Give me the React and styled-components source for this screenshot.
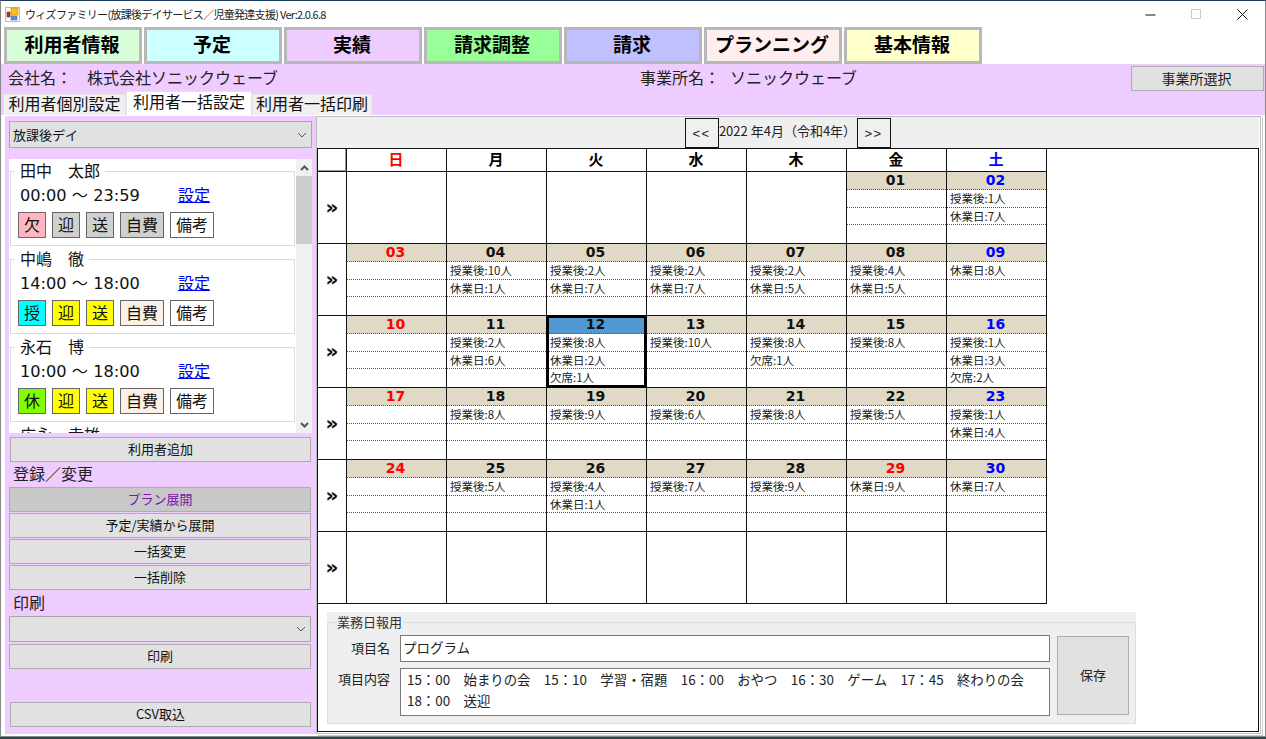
import React from "react";
import styled, { createGlobalStyle } from "styled-components";

const JP = `"Noto Sans CJK JP", "Liberation Sans", sans-serif`;
const NUM = `"DejaVu Sans", "Noto Sans CJK JP", sans-serif`;

const GlobalStyle = createGlobalStyle`
  html, body { margin: 0; padding: 0; height: 100%; overflow: hidden; background: #2a4a58; }
  body { font-family: ${JP}; color: #111; }
  * { box-sizing: border-box; }
`;

const navItems = [
  ["利用者情報", "#d9ffd9"],
  ["予定", "#ccffff"],
  ["実績", "#eeccff"],
  ["請求調整", "#99ff99"],
  ["請求", "#c0c0ff"],
  ["プランニング", "#ffeeee"],
  ["基本情報", "#ffffcc"],
];

const users = [
  { name: "田中　太郎", time: "00:00 ～ 23:59", kind: ["欠", "#ffb6c1"], pick: "#d0d0d0", self: "#d0d0d0" },
  { name: "中嶋　徹", time: "14:00 ～ 18:00", kind: ["授", "#00ffff"], pick: "#ffff00", self: "#faf0e6" },
  { name: "永石　博", time: "10:00 ～ 18:00", kind: ["休", "#7fff00"], pick: "#ffff00", self: "#faf0e6" },
];

const weekDays = [
  ["日", "#ff0000"],
  ["月", "#000"],
  ["火", "#000"],
  ["水", "#000"],
  ["木", "#000"],
  ["金", "#000"],
  ["土", "#0000ff"],
];

const weeks = [
  [null, null, null, null, null, { d: "01" }, { d: "02", c: "b", l: ["授業後:1人", "休業日:7人"] }],
  [
    { d: "03", c: "r" },
    { d: "04", l: ["授業後:10人", "休業日:1人"] },
    { d: "05", l: ["授業後:2人", "休業日:7人"] },
    { d: "06", l: ["授業後:2人", "休業日:7人"] },
    { d: "07", l: ["授業後:2人", "休業日:5人"] },
    { d: "08", l: ["授業後:4人", "休業日:5人"] },
    { d: "09", c: "b", l: ["休業日:8人"] },
  ],
  [
    { d: "10", c: "r" },
    { d: "11", l: ["授業後:2人", "休業日:6人"] },
    { d: "12", sel: true, l: ["授業後:8人", "休業日:2人", "欠席:1人"] },
    { d: "13", l: ["授業後:10人"] },
    { d: "14", l: ["授業後:8人", "欠席:1人"] },
    { d: "15", l: ["授業後:8人"] },
    { d: "16", c: "b", l: ["授業後:1人", "休業日:3人", "欠席:2人"] },
  ],
  [
    { d: "17", c: "r" },
    { d: "18", l: ["授業後:8人"] },
    { d: "19", l: ["授業後:9人"] },
    { d: "20", l: ["授業後:6人"] },
    { d: "21", l: ["授業後:8人"] },
    { d: "22", l: ["授業後:5人"] },
    { d: "23", c: "b", l: ["授業後:1人", "休業日:4人"] },
  ],
  [
    { d: "24", c: "r" },
    { d: "25", l: ["授業後:5人"] },
    { d: "26", l: ["授業後:4人", "休業日:1人"] },
    { d: "27", l: ["授業後:7人"] },
    { d: "28", l: ["授業後:9人"] },
    { d: "29", c: "r", l: ["休業日:9人"] },
    { d: "30", c: "b", l: ["休業日:7人"] },
  ],
  [null, null, null, null, null, null, null],
];

const dayColor = { r: "#ff0000", b: "#0000ff" };

const Win = styled.div`
  width: 1266px;
  height: 737px;
  background: #fff;
  border: 1px solid #888;
  border-top-color: #1c3d5e;
  display: flex;
  flex-direction: column;
`;

const TitleBar = styled.div`
  height: 26px;
  display: flex;
  align-items: center;
  padding-left: 4px;
  font-size: 11px;
  color: #222;
  letter-spacing: -0.7px;
  flex-shrink: 0;
`;

const TitleText = styled.span`
  margin-left: 5px;
  flex: 1;
`;

const WinBtn = styled.div`
  width: 46px;
  height: 26px;
  display: flex;
  align-items: center;
  justify-content: center;
`;

const NavBar = styled.div`
  display: flex;
  gap: 2px;
  padding-left: 3px;
  height: 37px;
  flex-shrink: 0;
`;

const NavButton = styled.div`
  width: 138px;
  height: 37px;
  border: 3px solid #b8b8b8;
  background: ${(p) => p.$bg};
  display: flex;
  align-items: center;
  justify-content: center;
  font-size: 19px;
  line-height: 26px;
  padding: 0 2px 4px 0;
  font-weight: 700;
  color: #000;
`;

const Purple = styled.div`
  background: #eeccff;
  height: 51px;
  display: flex;
  flex-direction: column;
  flex-shrink: 0;
`;

const CompanyRow = styled.div`
  height: 28px;
  display: flex;
  align-items: center;
  font-size: 16px;
  color: #222;
  padding-left: 7px;
`;

const CompanyLabel = styled.span`
  width: ${(p) => p.$w}px;
  margin-top: -3px;
`;

const CompanyName = styled.span`
  width: ${(p) => p.$w}px;
  margin-top: -3px;
`;

const SelectOffice = styled.div`
  width: 133px;
  height: 25px;
  align-self: flex-start;
  margin: 2px 1px 0 auto;
  padding: 0 2px 2px 0;
  background: #e1e1e1;
  border: 1px solid #adadad;
  font-size: 14px;
  display: flex;
  align-items: center;
  justify-content: center;
`;

const Tabs = styled.div`
  height: 23px;
  display: flex;
  align-items: flex-end;
  padding-left: 2px;
`;

const Tab = styled.div`
  height: ${(p) => (p.$active ? 24 : 21)}px;
  width: ${(p) => p.$w}px;
  background: ${(p) => (p.$active ? "#fff" : "#f0f0f0")};
  border: 1px solid #e4e4e4;
  border-bottom: 0;
  font-size: 16px;
  line-height: ${(p) => (p.$active ? 18 : 17)}px;
  text-align: center;
  color: #111;
  white-space: nowrap;
`;

const Body = styled.div`
  flex: 1;
  display: flex;
  padding: 1px 4px 2px 4px;
  background: #fff;
  min-height: 0;
`;

const Left = styled.div`
  width: 311px;
  background: #eeccff;
  padding: 5px 3px 0 4px;
  display: flex;
  flex-direction: column;
`;

const Combo = styled.div`
  width: ${(p) => p.$w}px;
  height: ${(p) => p.$h}px;
  margin-top: ${(p) => p.$mt || 0}px;
  background: #e1e1e1;
  border: 1px solid #a8a8a8;
  font-size: 13px;
  display: flex;
  align-items: center;
  justify-content: space-between;
  padding: 0 4px 0 3px;
  flex-shrink: 0;
`;

const ListBox = styled.div`
  margin-top: 11px;
  width: 303px;
  height: 274px;
  background: #fff;
  display: flex;
  flex-shrink: 0;
  overflow: hidden;
`;

const ListInner = styled.div`
  flex: 1;
  overflow: hidden;
  padding: 12px 1px 0 1px;
`;

const Group = styled.div`
  position: relative;
  width: 285px;
  height: 75px;
  margin-bottom: 13px;
  border: 1px solid #dcdcdc;
  padding: 11px 0 0 7px;
`;

const GroupName = styled.div`
  position: absolute;
  left: 4px;
  top: -11px;
  background: #fff;
  padding: 0 5px;
  font-size: 16px;
  line-height: 18px;
  color: #111;
`;

const TimeRow = styled.div`
  display: flex;
  align-items: center;
  height: 24px;
  font-family: ${NUM};
  font-size: 16.2px;
  padding: 0 0 3px 2px;
  color: #111;
`;

const TimeText = styled.span`
  width: 158px;
  white-space: nowrap;
`;

const SetLink = styled.a`
  color: #0000ee;
  text-decoration: underline;
  font-family: ${JP};
  font-size: 16px;
`;

const Chips = styled.div`
  display: flex;
  gap: 6px;
  margin-top: 5px;
`;

const Chip = styled.div`
  width: ${(p) => p.$w}px;
  height: 26px;
  background: ${(p) => p.$bg};
  border: 1px solid #666;
  font-size: 16px;
  line-height: 23px;
  text-align: center;
  color: #111;
`;

const ScrollBar = styled.div`
  width: 16px;
  background: #f0f0f0;
  display: flex;
  flex-direction: column;
  justify-content: space-between;
  align-items: center;
  position: relative;
`;

const ScrollArrow = styled.div`
  height: 17px;
  display: flex;
  align-items: center;
  justify-content: center;
`;

const ScrollThumb = styled.div`
  position: absolute;
  top: 17px;
  left: 0;
  width: 16px;
  height: 68px;
  background: #cdcdcd;
`;

const SideButton = styled.div`
  width: ${(p) => p.$w || 302}px;
  height: 25px;
  margin-left: ${(p) => p.$ml || 0}px;
  margin-top: ${(p) => p.$mt || 0}px;
  padding-bottom: 2px;
  background: ${(p) => (p.$on ? "#c8c8c8" : "#e1e1e1")};
  border: 1px solid #adadad;
  color: ${(p) => (p.$on ? "#7a12b0" : "#111")};
  font-size: 13px;
  display: flex;
  align-items: center;
  justify-content: center;
  flex-shrink: 0;
`;

const SideLabel = styled.div`
  font-size: 16px;
  height: 20px;
  line-height: 17px;
  padding-left: 4px;
  margin-top: ${(p) => p.$mt}px;
  color: #222;
`;

const Right = styled.div`
  flex: 1;
  border: 1px solid #bdbdbd;
  box-shadow: 1px 1px 0 #fff, 2px 2px 0 #c8c8c8;
  padding: 0 1px 1px 0;
  display: flex;
  flex-direction: column;
  background: #fff;
  min-width: 0;
`;

const MonthBar = styled.div`
  height: 31px;
  background: #efefef;
  display: flex;
  justify-content: center;
  align-items: flex-end;
  padding-right: 1px;
  font-size: 13px;
  color: #222;
  flex-shrink: 0;
`;

const MonthButton = styled.div`
  width: 34px;
  height: 30px;
  border: 1px solid #111;
  background: #f0f0f0;
  display: flex;
  align-items: center;
  justify-content: center;
  font-family: "Liberation Sans", sans-serif;
  font-size: 13px;
  letter-spacing: 1.5px;
`;

const MonthText = styled.div`
  width: 138px;
  height: 30px;
  line-height: 26px;
  text-align: center;
  white-space: nowrap;
`;

const CalendarBox = styled.div`
  flex: 1;
  border: 1px solid #111;
  background: #fff;
  display: flex;
  flex-direction: column;
  min-height: 0;
`;

const CalGrid = styled.div`
  display: grid;
  grid-template-columns: 29px repeat(7, 100px);
  grid-template-rows: 23px repeat(6, 72px);
  width: 729px;
  flex-shrink: 0;
`;

const CornerCell = styled.div`
  border-right: 1px solid #111;
  border-bottom: 1px solid #111;
  box-shadow: inset -1px -1px 0 #999;
`;

const HeadCell = styled.div`
  border-right: 1px solid #111;
  border-bottom: 1px solid #111;
  color: ${(p) => p.$c};
  font-size: 15px;
  font-weight: 700;
  text-align: center;
  line-height: 20px;
  padding-right: 1px;
`;

const RowHead = styled.div`
  border-right: 1px solid #111;
  border-bottom: 1px solid #111;
  display: flex;
  align-items: center;
  justify-content: center;
  font-family: ${NUM};
  font-size: 20px;
  font-weight: 700;
  padding-bottom: 1px;
`;

const DayCell = styled.div`
  position: relative;
  z-index: ${(p) => (p.$sel ? 1 : "auto")};
  border-right: 1px solid #111;
  border-bottom: 1px solid #111;
  display: flex;
  flex-direction: column;
  &::after {
    content: "";
    display: ${(p) => (p.$sel ? "block" : "none")};
    position: absolute;
    inset: -1px;
    border: 3px solid #000;
    pointer-events: none;
  }
`;

const DayNum = styled.div`
  height: 18px;
  background: ${(p) => (p.$sel ? "#5299d3" : "#dfd9c5")};
  border-bottom: 1px dotted #555;
  color: ${(p) => p.$c};
  font-family: ${NUM};
  font-size: 14px;
  font-weight: 700;
  line-height: 16px;
  text-align: center;
  padding-right: 2px;
`;

const DayLine = styled.div`
  height: 18px;
  border-bottom: ${(p) => (p.$last ? "0" : "1px dotted #555")};
  font-size: 11.5px;
  line-height: 16px;
  padding-left: 3px;
  color: #222;
  white-space: nowrap;
`;

const ReportWrap = styled.div`
  margin: 8px 0 0 9px;
  width: 809px;
  height: 112px;
  background: #efefef;
  padding-top: 10px;
  flex-shrink: 0;
`;

const ReportGroup = styled.div`
  position: relative;
  height: 102px;
  border: 1px solid #dcdcdc;
  display: grid;
  grid-template-columns: 62px 650px 1fr;
  grid-template-rows: 27px 48px;
  row-gap: 6px;
  column-gap: 10px;
  padding: 12px 0 0 0;
  align-items: stretch;
`;

const ReportTitle = styled.div`
  position: absolute;
  left: 9px;
  top: -9px;
  background: #efefef;
  font-size: 13px;
  line-height: 16px;
  color: #333;
  padding-right: 1px;
`;

const ReportLabel = styled.div`
  font-size: 13px;
  text-align: right;
  line-height: ${(p) => p.$lh}px;
  color: #222;
  white-space: nowrap;
`;

const ReportInput = styled.div`
  background: #fff;
  border: 1px solid #7a7a7a;
  font-size: ${(p) => p.$fs}px;
  line-height: ${(p) => p.$lh}px;
  padding: ${(p) => p.$pad};
  color: #222;
  white-space: pre;
`;

const SaveButton = styled.div`
  grid-column: 3;
  grid-row: 1 / span 2;
  width: 72px;
  height: 79px;
  margin-left: -3px;
  margin-top: 1px;
  padding-bottom: 3px;
  background: #e1e1e1;
  border: 1px solid #adadad;
  font-size: 13px;
  color: #222;
  display: flex;
  align-items: center;
  justify-content: center;
`;

const Chevron = () => (
  <svg width="10" height="6" viewBox="0 0 10 6">
    <path d="M1 1 L5 5 L9 1" fill="none" stroke="#555" strokeWidth="1" />
  </svg>
);

const ScrollChevron = ({ up }) => (
  <svg width="9" height="6" viewBox="0 0 9 6">
    <path d={up ? "M1 5 L4.5 1.5 L8 5" : "M1 1 L4.5 4.5 L8 1"} fill="none" stroke="#555" strokeWidth="2" />
  </svg>
);

const AppIcon = () => (
  <svg width="15" height="15" viewBox="0 0 15 15">
    <rect x="0.5" y="0.5" width="14" height="14" fill="#fff" stroke="#bcbcbc" />
    <rect x="6" y="1" width="7" height="7" fill="#f7c21a" stroke="#d08a00" strokeWidth="0.7" />
    <rect x="2" y="5" width="3" height="5" fill="#c8281e" stroke="#7a1a12" strokeWidth="0.5" />
    <rect x="6" y="9" width="6" height="4" fill="#5b8fd8" stroke="#3a68b0" strokeWidth="0.5" />
  </svg>
);

const UserGroup = ({ user }) => (
  <Group>
    <GroupName>{user.name}</GroupName>
    <TimeRow>
      <TimeText>{user.time}</TimeText>
      <SetLink>設定</SetLink>
    </TimeRow>
    <Chips>
      <Chip $w={28} $bg={user.kind[1]}>{user.kind[0]}</Chip>
      <Chip $w={28} $bg={user.pick}>迎</Chip>
      <Chip $w={28} $bg={user.pick}>送</Chip>
      <Chip $w={44} $bg={user.self}>自費</Chip>
      <Chip $w={44} $bg="#fff">備考</Chip>
    </Chips>
  </Group>
);

const Day = ({ day }) => {
  if (!day) return <DayCell />;
  const lines = day.l || [];
  return (
    <DayCell $sel={day.sel}>
      <DayNum $sel={day.sel} $c={dayColor[day.c] || "#111"}>{day.d}</DayNum>
      {[0, 1, 2].map((i) => (
        <DayLine key={i} $last={i === 2}>{lines[i] || ""}</DayLine>
      ))}
    </DayCell>
  );
};

export default function App() {
  return (
    <Win>
      <GlobalStyle />
      <TitleBar>
        <AppIcon />
        <TitleText>ウィズファミリー(放課後デイサービス／児童発達支援) Ver:2.0.6.8</TitleText>
        <WinBtn>
          <svg width="11" height="11" viewBox="0 0 11 11"><path d="M0.5 6 H10.5" stroke="#111" /></svg>
        </WinBtn>
        <WinBtn>
          <svg width="11" height="11" viewBox="0 0 11 11"><rect x="0.5" y="0.5" width="9" height="9" fill="none" stroke="#ccc" /></svg>
        </WinBtn>
        <WinBtn>
          <svg width="11" height="11" viewBox="0 0 11 11"><path d="M0.5 0.5 L10.5 10.5 M10.5 0.5 L0.5 10.5" stroke="#111" /></svg>
        </WinBtn>
      </TitleBar>
      <NavBar>
        {navItems.map(([label, bg]) => (
          <NavButton key={label} $bg={bg}>{label}</NavButton>
        ))}
      </NavBar>
      <Purple>
        <CompanyRow>
          <CompanyLabel $w={79}>会社名：</CompanyLabel>
          <CompanyName $w={553}>株式会社ソニックウェーブ</CompanyName>
          <CompanyLabel $w={90}>事業所名：</CompanyLabel>
          <CompanyName $w={200}>ソニックウェーブ</CompanyName>
          <SelectOffice>事業所選択</SelectOffice>
        </CompanyRow>
        <Tabs>
          <Tab $w={123}>利用者個別設定</Tab>
          <Tab $w={126} $active>利用者一括設定</Tab>
          <Tab $w={120}>利用者一括印刷</Tab>
        </Tabs>
      </Purple>
      <Body>
        <Left>
          <Combo $w={303} $h={27}>放課後デイ<Chevron /></Combo>
          <ListBox>
            <ListInner>
              {users.map((u) => <UserGroup key={u.name} user={u} />)}
              <Group>
                <GroupName>広永　幸雄</GroupName>
              </Group>
            </ListInner>
            <ScrollBar>
              <ScrollArrow><ScrollChevron up /></ScrollArrow>
              <ScrollThumb />
              <ScrollArrow><ScrollChevron /></ScrollArrow>
            </ScrollBar>
          </ListBox>
          <SideButton $ml={1} $w={301} $mt={4}>利用者追加</SideButton>
          <SideLabel $mt={3}>登録／変更</SideLabel>
          <SideButton $mt={2} $on>プラン展開</SideButton>
          <SideButton $mt={1}>予定/実績から展開</SideButton>
          <SideButton $mt={1}>一括変更</SideButton>
          <SideButton $mt={1}>一括削除</SideButton>
          <SideLabel $mt={4}>印刷</SideLabel>
          <Combo $w={302} $h={26} $mt={2}><span /><Chevron /></Combo>
          <SideButton $mt={2}>印刷</SideButton>
          <SideButton $ml={1} $w={301} $mt={33}>CSV取込</SideButton>
        </Left>
        <Right>
          <MonthBar>
            <MonthButton>&lt;&lt;</MonthButton>
            <MonthText>2022 年4月（令和4年）</MonthText>
            <MonthButton>&gt;&gt;</MonthButton>
          </MonthBar>
          <CalendarBox>
            <CalGrid>
              <CornerCell />
              {weekDays.map(([d, c]) => <HeadCell key={d} $c={c}>{d}</HeadCell>)}
              {weeks.map((w, i) => (
                <React.Fragment key={i}>
                  <RowHead>»</RowHead>
                  {w.map((day, j) => <Day key={j} day={day} />)}
                </React.Fragment>
              ))}
            </CalGrid>
            <ReportWrap>
              <ReportGroup>
                <ReportTitle>業務日報用</ReportTitle>
                <ReportLabel $lh={25}>項目名</ReportLabel>
                <ReportInput $fs={13.5} $lh={23} $pad="0 2px">プログラム</ReportInput>
                <SaveButton>保存</SaveButton>
                <ReportLabel $lh={22}>項目内容</ReportLabel>
                <ReportInput $fs={13.4} $lh={21} $pad="0 6px">{"15：00　始まりの会　15：10　学習・宿題　16：00　おやつ　16：30　ゲーム　17：45　終わりの会\n18：00　送迎"}</ReportInput>
              </ReportGroup>
            </ReportWrap>
          </CalendarBox>
        </Right>
      </Body>
    </Win>
  );
}
